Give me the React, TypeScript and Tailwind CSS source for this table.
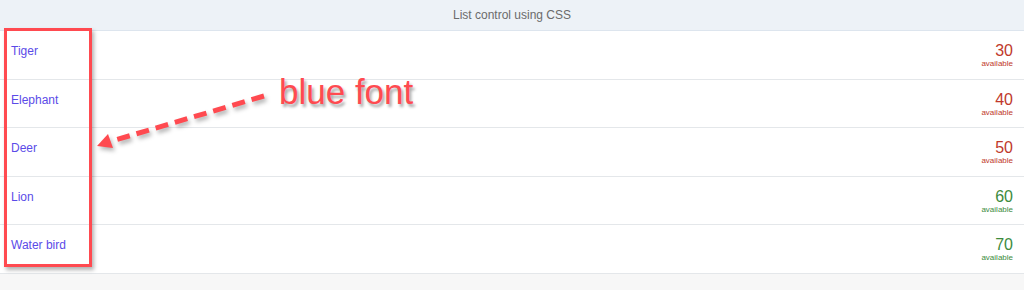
import React from 'react';

interface Animal {
  name: string;
  count: number;
}

const animals: Animal[] = [
  { name: 'Tiger', count: 30 },
  { name: 'Elephant', count: 40 },
  { name: 'Deer', count: 50 },
  { name: 'Lion', count: 60 },
  { name: 'Water bird', count: 70 },
];

function Row({ name, count }: Animal) {
  const low = count < 60;
  return (
    <div className="h-[48.5px] border-b border-[#e4e7ea] bg-white flex justify-between pl-[11px] pr-[11px] pt-[13px]">
      <span className="text-[12px] leading-[14px] text-[#5b4be8]">{name}</span>
      <div className={`flex flex-col items-end -mt-[2px] ${low ? 'text-[#c0392b]' : 'text-[#3d8b3d]'}`}>
        <span className="text-[16px] leading-[17px]">{count}</span>
        <span className="text-[8px] leading-[9px]">available</span>
      </div>
    </div>
  );
}

export default function App() {
  return (
    <div className="relative w-[1024px] h-[290px] bg-[#f7f7f7] overflow-hidden font-['Liberation_Sans',Arial,sans-serif]">
      <div className="h-[31px] bg-[#edf2f7] border-b border-[#dde5ee] flex items-center justify-center text-[12px] text-[#6b6b6b]">
        List control using CSS
      </div>
      {animals.map((a) => (
        <Row key={a.name} {...a} />
      ))}

      {/* annotation overlay */}
      <div className="absolute left-[4px] top-[28px] w-[88px] h-[239px] border-[3px] border-[#ff4a50] shadow-[2px_3px_4px_rgba(0,0,0,0.3)]" />
      <svg className="absolute left-0 top-0" width="1024" height="290" style={{ filter: 'drop-shadow(2px 3px 2px rgba(0,0,0,0.3))' }}>
        <line x1="264" y1="96" x2="112" y2="141" stroke="#ff4a50" strokeWidth="5" strokeDasharray="13 7" />
        <polygon points="97,146 108,134 113,148" fill="#ff4a50" />
      </svg>
      <div className="absolute left-[279px] top-[72px] text-[35px] leading-[40px] text-[#ff4a50] [text-shadow:2px_3px_3px_rgba(0,0,0,0.35)]">
        blue font
      </div>
    </div>
  );
}
